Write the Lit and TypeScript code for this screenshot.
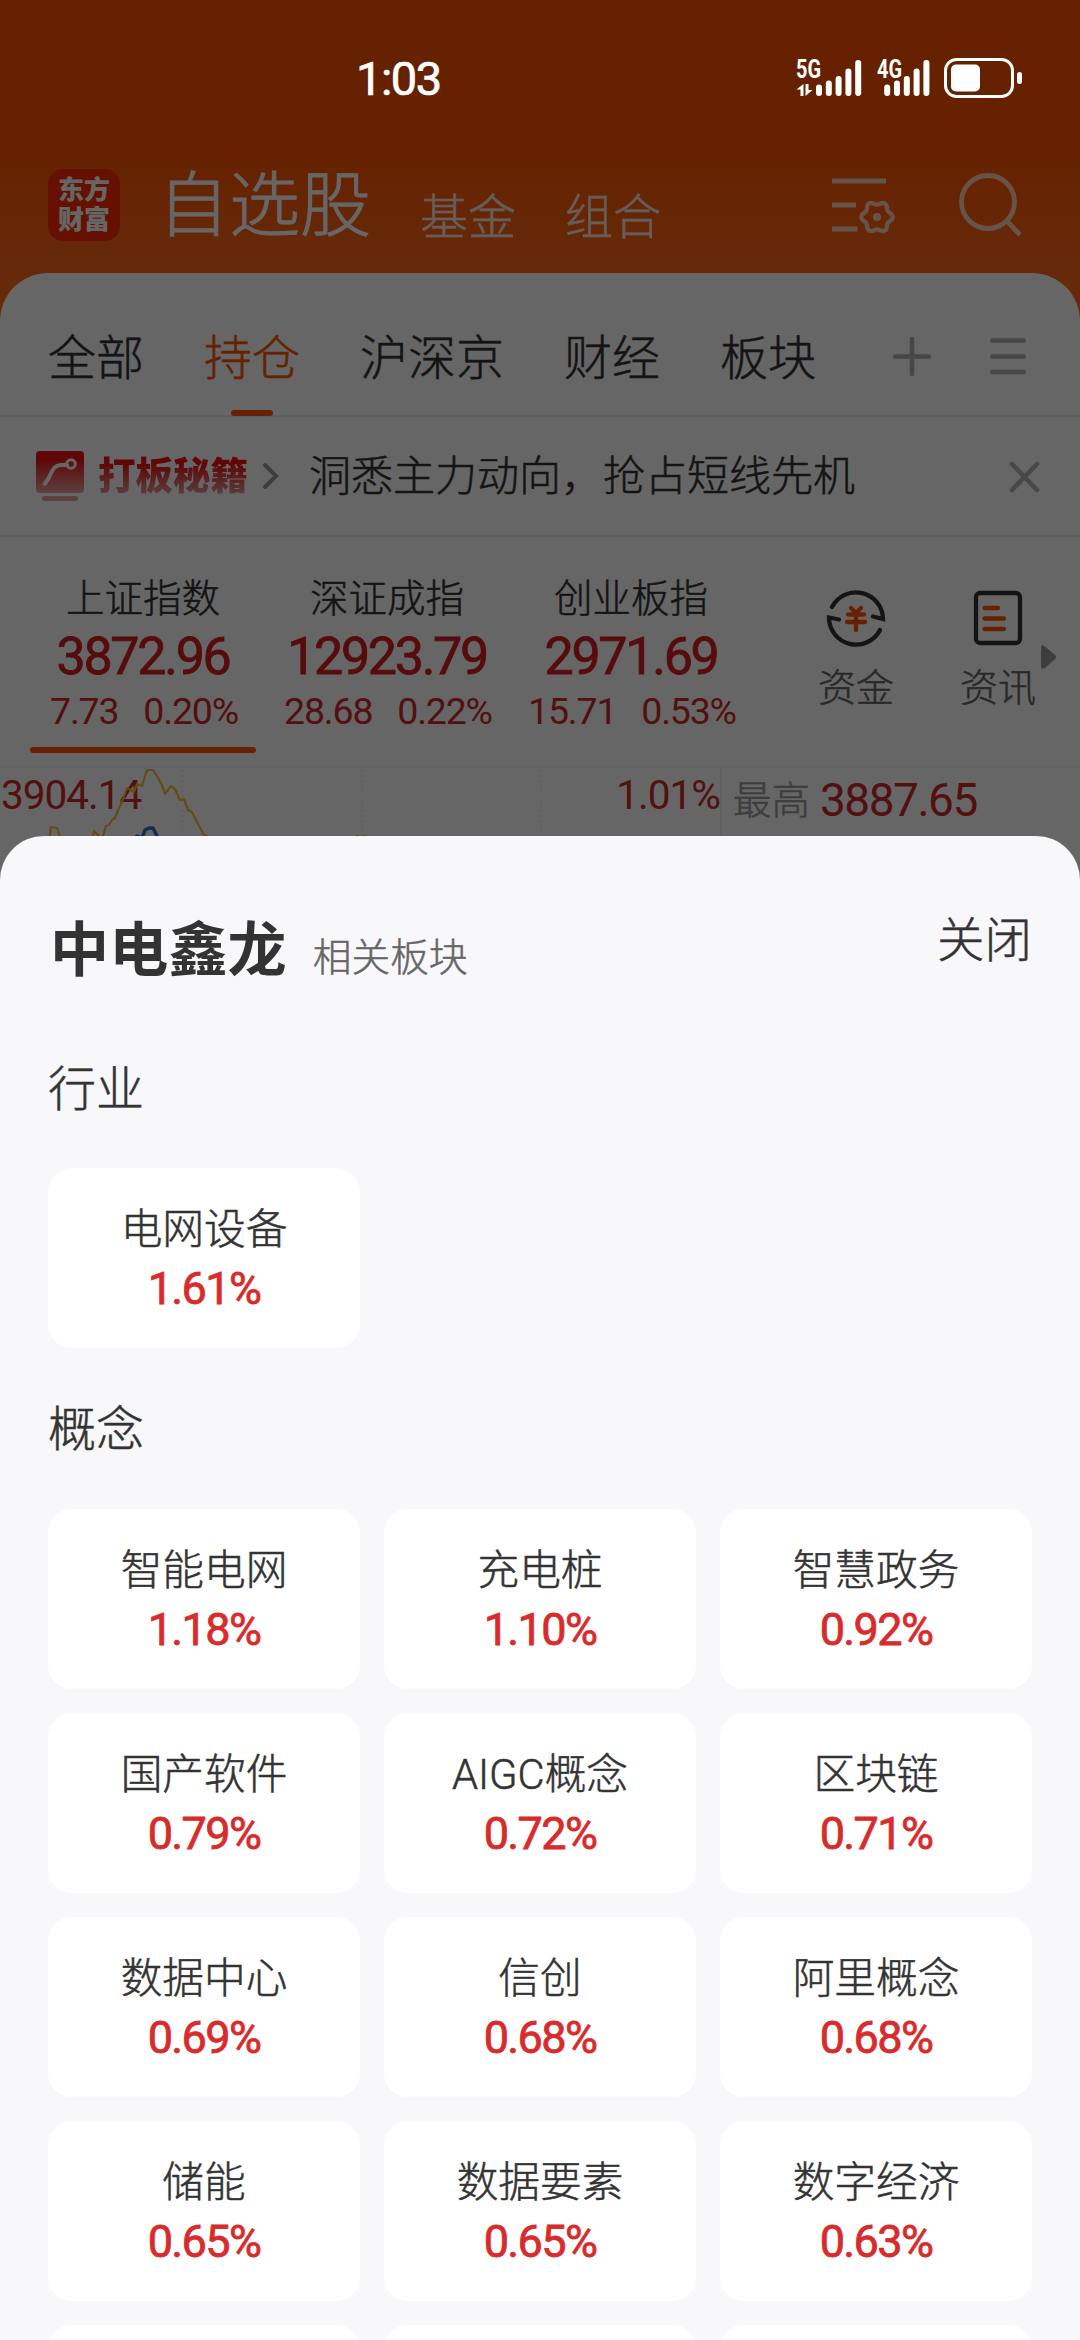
import { LitElement, html, css, svg } from "lit";
import { customElement } from "lit/decorators.js";

interface Board { name: string; pct: string; }
interface Index { name: string; value: string; diff: string; pct: string; }

const INDUSTRIES: Board[] = [{ name: "电网设备", pct: "1.61%" }];
const CONCEPTS: Board[] = [
  { name: "智能电网", pct: "1.18%" }, { name: "充电桩", pct: "1.10%" }, { name: "智慧政务", pct: "0.92%" },
  { name: "国产软件", pct: "0.79%" }, { name: "AIGC概念", pct: "0.72%" }, { name: "区块链", pct: "0.71%" },
  { name: "数据中心", pct: "0.69%" }, { name: "信创", pct: "0.68%" }, { name: "阿里概念", pct: "0.68%" },
  { name: "储能", pct: "0.65%" }, { name: "数据要素", pct: "0.65%" }, { name: "数字经济", pct: "0.63%" },
  { name: "", pct: "" }, { name: "", pct: "" }, { name: "", pct: "" },
];
const INDICES: Index[] = [
  { name: "上证指数", value: "3872.96", diff: "7.73", pct: "0.20%" },
  { name: "深证成指", value: "12923.79", diff: "28.68", pct: "0.22%" },
  { name: "创业板指", value: "2971.69", diff: "15.71", pct: "0.53%" },
];

const gearPath = (cx: number, cy: number, r: number, a: number) => {
  const pts: string[] = [];
  for (let i = 0; i < 72; i++) {
    const t = (i / 72) * Math.PI * 2;
    const k = r + a * Math.cos(6 * t);
    pts.push(`${(cx + k * Math.cos(t)).toFixed(2)} ${(cy + k * Math.sin(t)).toFixed(2)}`);
  }
  return `M${pts.join("L")}Z`;
};

const signal = (x: number) => [11.5, 15.5, 20, 27.5, 36].map(
  (h, i) => svg`<rect x=${x + i * 9.8} y=${96 - h} width="6" height=${h} rx="3"/>`);

@customElement("app-root")
export class AppRoot extends LitElement {
  static styles = css`
    :host { display: block; width: 1080px; height: 2340px; overflow: hidden; position: relative;
      font-family: Roboto, "Noto Sans CJK SC", sans-serif; font-weight: 300; color: #333; background: #fff;
      -webkit-text-stroke: .5px currentColor; }
    * { box-sizing: border-box; }
    svg { display: block; flex: none; overflow: visible; }
    .page { height: 2340px; display: flex; flex-direction: column;
      background: linear-gradient(#f50 0, #f50 155px, #ff6a1a 273px); }
    .head { height: 273px; flex: none; padding: 169px 58px 0 48px; display: flex; color: #fff; }
    .logo { width: 72px; height: 72px; border-radius: 15px; background: #fc2a00; color: #fff;
      font: 900 26px/30px "Noto Sans CJK SC", sans-serif; text-align: center; padding-top: 4px; -webkit-text-stroke: 0; }
    .h1 { font-size: 71px; line-height: 73px; margin-left: 38px; width: 262px; -webkit-text-stroke: .9px #fff; }
    .h2 { font-size: 48px; line-height: 98px; width: 145px; opacity: .85; }
    .acts { margin-left: auto; width: 192px; }
    .panel { flex: 1; background: #fff; border-radius: 48px 48px 0 0; }
    .tabs { height: 144px; padding: 0 48px; display: flex; border-bottom: 2px solid #eaeaea;
      font-size: 48px; line-height: 171px; }
    .tab { margin-right: 60px; position: relative; height: 143px; }
    .on { color: #f50; }
    .on::after { content: ""; position: absolute; left: 27px; bottom: 0; width: 42px; height: 6px;
      border-radius: 3px; background: #f50; }
    .tabicons { margin: 64px 0 0 auto; }
    .banner { height: 120px; border-bottom: 2px solid #eaeaea; display: flex; align-items: center; padding: 0 41px 0 36px; }
    .slogan { font: 900 37.5px/44px "Noto Sans CJK SC", sans-serif; margin: -6px 0 0 14px; width: 152px; -webkit-text-stroke: 0;
      background: linear-gradient(#f01010 30%, #e09090 95%); -webkit-background-clip: text; background-clip: text; color: transparent; }
    .chev { margin: 0 31px 0 12px; }
    .msg { font-size: 42px; line-height: 60px; padding-top: 2px; flex: 1; }
    .quotes { height: 229px; display: flex; padding-left: 21px; }
    .idx { width: 244px; display: flex; flex-direction: column; align-items: center; position: relative; white-space: nowrap; }
    .idx .n { font-size: 38.5px; line-height: 46px; margin-top: 39px; }
    .idx .v { font-size: 52px; line-height: 56px; font-weight: 400; letter-spacing: -2.3px; color: #d82020; margin-top: 7px;
      -webkit-text-stroke: .8px #d82020; }
    .idx .c { font-size: 37.5px; line-height: 44px; letter-spacing: -1.2px; color: #d02828; display: flex; gap: 25px; margin-top: 4px;
      font-weight: 400; -webkit-text-stroke: 0; padding-left: 2px; }
    .idx.sel::after { content: ""; position: absolute; left: 9px; top: 210px; width: 226px; height: 6px; border-radius: 3px; background: #f50; }
    .tool { width: 142px; display: flex; flex-direction: column; align-items: center; color: #666; font-size: 38px; line-height: 46px; }
    .tool svg { margin: 51px 0 17px; }
    .tools { display: flex; margin-left: 32px; position: relative; }
    .more { position: absolute; left: 256px; top: 108px; }
    .chart { height: 300px; display: flex; border-top: 2px solid #f5f5f5; position: relative; color: #d02828; font-weight: 400;
      white-space: nowrap; -webkit-text-stroke: 0; }
    .plot { width: 722px; border-right: 2px solid #f0f0f0; display: flex; justify-content: space-between;
      font-size: 40.5px; line-height: 55px; padding: 0 0 0 1px; letter-spacing: -1px; }
    .line { position: absolute; left: 0; top: 0; }
    .hi { padding-left: 11px; display: flex; gap: 10px; font-size: 46px; line-height: 65px; }
    .hi .k { font-size: 38.5px; color: #999; font-weight: 300; -webkit-text-stroke: .5px currentColor; }
    .hi .v { letter-spacing: -1.5px; }
    .mask { position: absolute; inset: 0; background: rgba(0,0,0,.6); }
    .status { position: absolute; left: 0; right: 0; top: 50px; height: 60px; display: flex; color: #fff; }
    .clock { font-size: 47px; line-height: 57px; font-weight: 400; letter-spacing: -1.5px; margin-left: 356px; width: 439px;
      -webkit-text-stroke: .7px #fff; }
    .net { font: 700 25px Roboto, sans-serif; -webkit-text-stroke: 0; }
    .sheet { position: absolute; left: 0; right: 0; top: 836px; bottom: 0; background: #f8f8fa; overflow: hidden;
      border-radius: 44px 44px 0 0; padding: 0 48px; }
    .title { display: flex; height: 207px; }
    .stock { font-size: 59px; line-height: 230px; font-weight: 700; letter-spacing: .2px; margin-left: 2px; -webkit-text-stroke: 0; }
    .rel { font-size: 38.7px; line-height: 244px; color: #666; margin-left: 26px; flex: 1; }
    .close { font-size: 47.5px; line-height: 211px; }
    .sec { font-size: 48px; line-height: 93px; height: 125px; }
    .sec.b { height: 161px; line-height: 163px; }
    .grid { display: grid; grid-template-columns: repeat(3, 312px); gap: 24px; }
    .card { height: 180px; border-radius: 24px; background: #fff; display: flex; flex-direction: column; align-items: center; }
    .card .n { font-size: 41.7px; line-height: 56px; margin-top: 34px; }
    .card .p { font-size: 45px; line-height: 56px; font-weight: 400; letter-spacing: -1.6px; color: #d82c2c; margin-top: 3px;
      -webkit-text-stroke: .8px #d82c2c; }
  `;

  card(b: Board) {
    return html`<div class="card">${b.name ? html`<div class="n">${b.name}</div><div class="p">${b.pct}</div>` : ""}</div>`;
  }

  render() {
    return html`
      <div class="page">
        <div class="head">
          <div class="logo">东方<br>财富</div>
          <div class="h1">自选股</div><div class="h2">基金</div><div class="h2">组合</div>
          <svg class="acts" width="192" height="72" viewBox="829 169 192 72" fill="none" stroke="#fff" stroke-width="4.8" opacity=".7">
            <path d="M831 181H885M831 205H855M831 229H856.5"/>
            <path stroke-width="4.2" d=${gearPath(876, 217, 14, 1.7)}/>
            <circle cx="876" cy="217" r="4" fill="#fff" stroke="none"/>
            <circle cx="987" cy="202" r="26.5"/><path d="M1005 220L1019 235"/>
          </svg>
        </div>
        <div class="panel">
          <div class="tabs">
            <div class="tab">全部</div><div class="tab on">持仓</div><div class="tab">沪深京</div>
            <div class="tab">财经</div><div class="tab">板块</div>
            <svg class="tabicons" width="140" height="40" viewBox="892 337 140 40" fill="none" stroke="#b4b4b4" stroke-width="4.6" stroke-linecap="round">
              <path d="M895 356.5H929M912 339V374"/><path d="M992 340.5H1024M992 356.5H1024M992 372H1024"/>
            </svg>
          </div>
          <div class="banner">
            <svg width="48" height="50" viewBox="0 0 48 50">
              <defs><linearGradient id="g" x1="0" y1="0" x2="0" y2="1"><stop offset=".2" stop-color="#f01010"/><stop offset="1" stop-color="#e8a0a0"/></linearGradient></defs>
              <rect width="48" height="42" rx="4" fill="url(#g)"/><rect x="6" y="45" width="36" height="5" rx="2.5" fill="#e8a0a0"/>
              <path d="M8.500 33C16 26 14 15 25 14H31" fill="none" stroke="#fff" stroke-width="4" stroke-linecap="round"/>
              <circle cx="35" cy="13" r="4.300" fill="none" stroke="#fff" stroke-width="3"/>
            </svg>
            <div class="slogan">打板秘籍</div>
            <svg class="chev" width="16" height="28" viewBox="0 0 16 28" fill="none" stroke="#999" stroke-width="4" stroke-linecap="round"><path d="M3 3L14 14L3 25"/></svg>
            <div class="msg">洞悉主力动向，抢占短线先机</div>
            <svg width="30" height="30" viewBox="0 0 30 30" fill="none" stroke="#b4b4b4" stroke-width="4.600" stroke-linecap="round"><path d="M3 3L28 29M28 3L3 29"/></svg>
          </div>
          <div class="quotes">
            ${INDICES.map((x, i) => html`<div class="idx ${i === 0 ? "sel" : ""}">
              <div class="n">${x.name}</div><div class="v">${x.value}</div>
              <div class="c"><span>${x.diff}</span><span>${x.pct}</span></div></div>`)}
            <div class="tools">
              <div class="tool">
                <svg width="60" height="60" viewBox="0 0 60 60" fill="none" stroke="#333" stroke-width="4.300" stroke-linecap="round">
                  <path d="M6 19A27 27 0 0 1 57 31L47 28.500"/><path d="M54 42A27 27 0 0 1 3 29.500L13 31.500"/>
                  <path stroke="#f50" d="M25 20L30 25L35 20M22 26.500H38M21 34H39M30 26V42"/>
                </svg>资金</div>
              <div class="tool">
                <svg width="60" height="60" viewBox="0 0 60 60" fill="none" stroke="#333" stroke-width="4.300" stroke-linecap="round">
                  <rect x="8" y="5" width="44" height="50" rx="4"/>
                  <path stroke="#f50" d="M16.500 20H30M16.500 30.500H36M16.500 41H36"/>
                </svg>资讯</div>
              <svg class="more" width="16" height="24" viewBox="0 0 16 24"><path d="M0 2Q1-1 4 1.500L14 10Q16 12 14 14L4 23Q1 25 0 22Z" fill="#999"/></svg>
            </div>
          </div>
          <div class="chart">
            <svg class="line" width="720" height="90" viewBox="0 766 720 90" fill="none">
              <path d="M182.500 768V850M362.500 768V850M541 768V850" stroke="#eee" stroke-width="1.500" stroke-dasharray="2 3"/>
              <path d="M49 840L51 825L57 826L61 838M91 845L94 829L102 837L106 824L109 823L112 818L115 816L119 806L122 800L127 786L134 790L137 782L142 784L147 768L153 768L157 774L162 783L165 792L171 784L175 787L180 798L184 797L188 808L192 810L198 822L204 833L211 836L213 838M354 836L357 834L360 835L366 834L368 838" stroke="#ffba35" stroke-width="2.200" stroke-linejoin="round"/>
              <path d="M133 840L137 834L142 836L145 828L149 826H153L157 834L160 842" stroke="#2f70c8" stroke-width="3.500" stroke-linejoin="round"/>
            </svg>
            <div class="plot"><span>3904.14</span><span>1.01%</span></div>
            <div class="hi"><span class="k">最高</span><span class="v">3887.65</span></div>
          </div>
        </div>
      </div>
      <div class="mask"></div>
      <div class="status">
        <div class="clock">1:03</div>
        <svg width="230" height="50" viewBox="794 50 230 50" fill="#fff">
          <text class="net" x="795" y="78" textLength="25" lengthAdjust="spacingAndGlyphs">5G</text>
          <text class="net" x="876" y="78" textLength="25" lengthAdjust="spacingAndGlyphs">4G</text>
          <path d="M795.500 89.500L802.500 84V96H799.500V89.500ZM804.500 84H807.500V90H811.500L804.500 96Z"/>
          ${signal(815)}${signal(883.2)}
          <rect x="944.500" y="59.500" width="67" height="37" rx="11" fill="none" stroke="#fff" stroke-width="3"/>
          <rect x="950" y="64.500" width="29" height="27" rx="5"/>
          <rect x="1016" y="72" width="5" height="12" rx="2.500"/>
        </svg>
      </div>
      <div class="sheet">
        <div class="title"><div class="stock">中电鑫龙</div><div class="rel">相关板块</div><div class="close">关闭</div></div>
        <div class="sec">行业</div>
        <div class="grid">${INDUSTRIES.map((b) => this.card(b))}</div>
        <div class="sec b">概念</div>
        <div class="grid">${CONCEPTS.map((b) => this.card(b))}</div>
      </div>`;
  }
}
